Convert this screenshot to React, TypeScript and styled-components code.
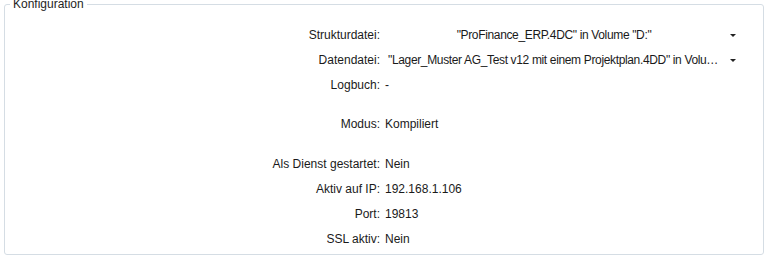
import React from "react"
import styled, { createGlobalStyle } from "styled-components"

const GlobalStyle = createGlobalStyle`
  html, body {
    margin: 0;
    padding: 0;
    background: #ffffff;
    overflow: hidden;
  }
  body {
    font-family: "Liberation Sans", Arial, sans-serif;
    font-size: 12px;
    color: #1a1a1a;
  }
`

const Group = styled.fieldset`
  box-sizing: border-box;
  margin: -3px 4px 0 4px;
  width: 760px;
  height: 258px;
  padding: 0;
  border: 1px solid #d5dde4;
  border-radius: 3px;
`

const Title = styled.legend`
  margin-left: 5px;
  padding: 0 3px;
  line-height: 14px;
  color: #1e1e1e;
`

const Form = styled.div`
  display: grid;
  grid-template-columns: 375px 360px;
  column-gap: 5px;
  padding-top: 12px;
`

const Label = styled.div<{ $gap?: number }>`
  text-align: right;
  height: 25px;
  line-height: 25px;
  margin-top: ${(p) => p.$gap ?? 0}px;
  white-space: nowrap;
`

const Value = styled.div<{ $gap?: number }>`
  height: 25px;
  line-height: 25px;
  margin-top: ${(p) => p.$gap ?? 0}px;
  white-space: nowrap;
`

const Combo = styled.div`
  display: flex;
  align-items: center;
  height: 25px;
`

const ComboText = styled.span<{ $center?: boolean }>`
  flex: 1;
  min-width: 0;
  overflow: hidden;
  text-overflow: ellipsis;
  white-space: nowrap;
  letter-spacing: -0.35px;
  text-align: ${(p) => (p.$center ? "center" : "left")};
  padding-left: ${(p) => (p.$center ? "0" : "3px")};
  line-height: 25px;
`

const Arrow = styled.span`
  width: 0;
  height: 0;
  margin: 0 9px 0 7px;
  border-left: 3px solid transparent;
  border-right: 3px solid transparent;
  border-top: 3px solid #222;
`

interface Field {
  label: string
  value: string
  gap?: number
}

const fields: Field[] = [
  { label: "Logbuch:", value: "-" },
  { label: "Modus:", value: "Kompiliert", gap: 14 },
  { label: "Als Dienst gestartet:", value: "Nein", gap: 15 },
  { label: "Aktiv auf IP:", value: "192.168.1.106" },
  { label: "Port:", value: "19813" },
  { label: "SSL aktiv:", value: "Nein" },
]

export default function App() {
  return (
    <>
      <GlobalStyle />
      <Group>
        <Title>Konfiguration</Title>
        <Form>
          <Label>Strukturdatei:</Label>
          <Combo>
            <ComboText $center>"ProFinance_ERP.4DC" in Volume "D:"</ComboText>
            <Arrow />
          </Combo>
          <Label>Datendatei:</Label>
          <Combo>
            <ComboText>
              "Lager_Muster AG_Test v12 mit einem Projektplan.4DD" in Volume "D:"
            </ComboText>
            <Arrow />
          </Combo>
          {fields.map((f) => (
            <React.Fragment key={f.label}>
              <Label $gap={f.gap}>{f.label}</Label>
              <Value $gap={f.gap}>{f.value}</Value>
            </React.Fragment>
          ))}
        </Form>
      </Group>
    </>
  )
}
